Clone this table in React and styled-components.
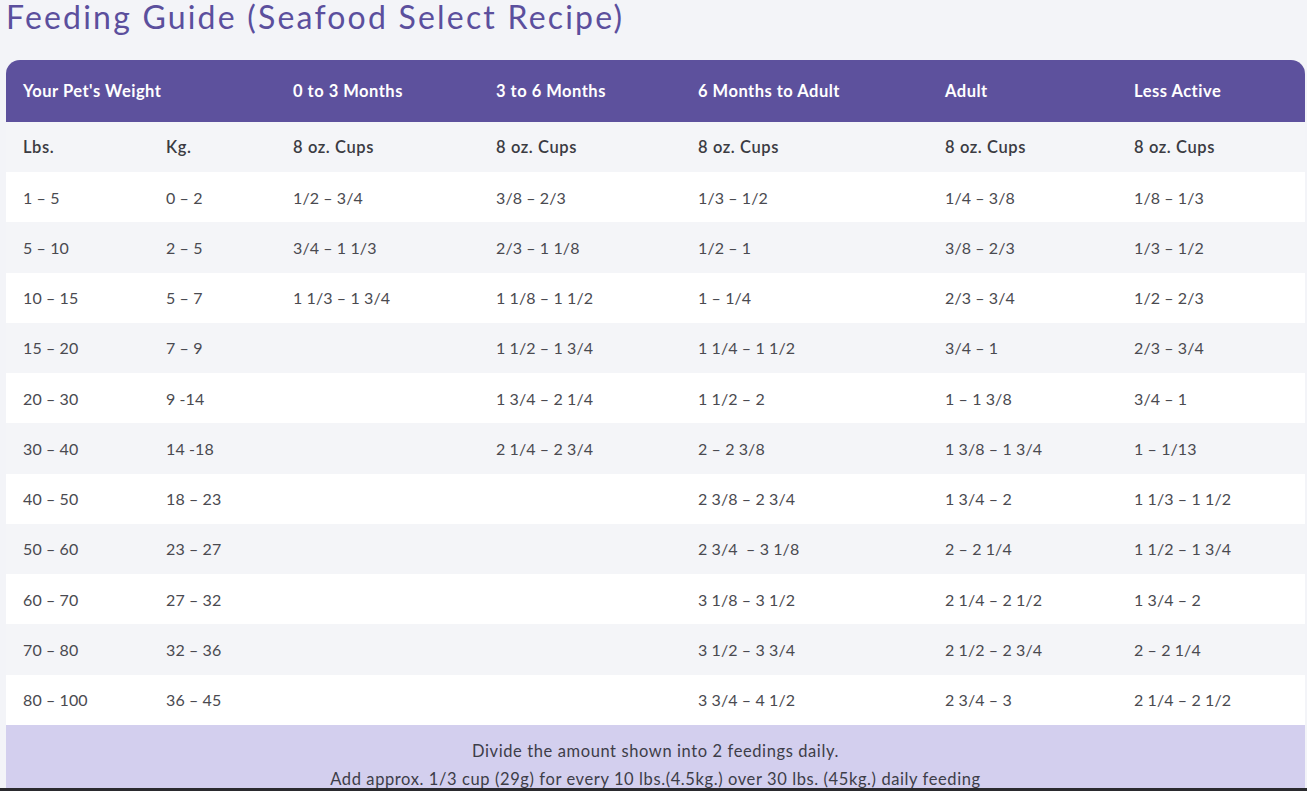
import React from 'react'
import styled, { createGlobalStyle } from 'styled-components'

const GlobalStyle = createGlobalStyle`
  html, body {
    margin: 0;
    padding: 0;
    background: #f3f4f8;
    font-family: Lato, "Open Sans", sans-serif;
    overflow: hidden;
  }
`

const COLS = '143px 127px 203px 202px 247px 189px 188px'

const rows = [
  ['1 – 5', '0 – 2', '1/2 – 3/4', '3/8 – 2/3', '1/3 – 1/2', '1/4 – 3/8', '1/8 – 1/3'],
  ['5 – 10', '2 – 5', '3/4 – 1 1/3', '2/3 – 1 1/8', '1/2 – 1', '3/8 – 2/3', '1/3 – 1/2'],
  ['10 – 15', '5 – 7', '1 1/3 – 1 3/4', '1 1/8 – 1 1/2', '1 – 1/4', '2/3 – 3/4', '1/2 – 2/3'],
  ['15 – 20', '7 – 9', '', '1 1/2 – 1 3/4', '1 1/4 – 1 1/2', '3/4 – 1', '2/3 – 3/4'],
  ['20 – 30', '9 -14', '', '1 3/4 – 2 1/4', '1 1/2 – 2', '1 – 1 3/8', '3/4 – 1'],
  ['30 – 40', '14 -18', '', '2 1/4 – 2 3/4', '2 – 2 3/8', '1 3/8 – 1 3/4', '1 – 1/13'],
  ['40 – 50', '18 – 23', '', '', '2 3/8 – 2 3/4', '1 3/4 – 2', '1 1/3 – 1 1/2'],
  ['50 – 60', '23 – 27', '', '', '2 3/4  – 3 1/8', '2 – 2 1/4', '1 1/2 – 1 3/4'],
  ['60 – 70', '27 – 32', '', '', '3 1/8 – 3 1/2', '2 1/4 – 2 1/2', '1 3/4 – 2'],
  ['70 – 80', '32 – 36', '', '', '3 1/2 – 3 3/4', '2 1/2 – 2 3/4', '2 – 2 1/4'],
  ['80 – 100', '36 – 45', '', '', '3 3/4 – 4 1/2', '2 3/4 – 3', '2 1/4 – 2 1/2'],
]

const Page = styled.div`
  padding: 0 2px 0 6px;
`

const Title = styled.h1`
  margin: 0;
  height: 60px;
  font-size: 32px;
  line-height: 34px;
  font-weight: 400;
  color: #5b4f9d;
  letter-spacing: 2.2px;
`

const Table = styled.div`
  display: grid;
  grid-template-columns: ${COLS};
  border-radius: 14px 14px 0 0;
  overflow: hidden;
`

const HeadRow = styled.div`
  display: contents;
`

const HeadCell = styled.div`
  grid-column: span ${(p) => p.span || 1};
  height: 62px;
  display: flex;
  align-items: center;
  padding-left: 17px;
  background: #5d519d;
  color: #fff;
  font-size: 16.5px;
  font-weight: 700;
  letter-spacing: 0.5px;
`

const Cell = styled.div`
  height: ${(p) => (p.$sub ? '50px' : '50.27px')};
  display: flex;
  align-items: center;
  padding-left: 17px;
  background: ${(p) => (p.$shade ? '#f4f5f8' : '#ffffff')};
  color: ${(p) => (p.$sub ? '#3b3b42' : '#4a4a50')};
  font-size: ${(p) => (p.$sub ? '16.5px' : '16px')};
  font-weight: ${(p) => (p.$sub ? 600 : 400)};
  letter-spacing: ${(p) => (p.$sub ? '0.6px' : '0.1px')};
  white-space: pre;
`

const Note = styled.div`
  grid-column: 1 / -1;
  background: #d3cfee;
  padding: 12px 0 2px;
  height: 49px;
  text-align: center;
  color: #3d3d48;
  font-size: 16.5px;
  line-height: 28px;
  letter-spacing: 0.6px;
`

const Bottom = styled.div`
  height: 20px;
  margin-left: -6px;
  margin-right: -2px;
  background: #2a2a2e;
`

export default function App() {
  return (
    <>
      <GlobalStyle />
      <Page>
        <Title>Feeding Guide (Seafood Select Recipe)</Title>
        <Table>
          <HeadRow>
            <HeadCell span={2}>Your Pet's Weight</HeadCell>
            <HeadCell>0 to 3 Months</HeadCell>
            <HeadCell>3 to 6 Months</HeadCell>
            <HeadCell>6 Months to Adult</HeadCell>
            <HeadCell>Adult</HeadCell>
            <HeadCell>Less Active</HeadCell>
          </HeadRow>
          {['Lbs.', 'Kg.', '8 oz. Cups', '8 oz. Cups', '8 oz. Cups', '8 oz. Cups', '8 oz. Cups'].map((t, i) => (
            <Cell key={'s' + i} $shade $sub>
              {t}
            </Cell>
          ))}
          {rows.map((r, ri) =>
            r.map((t, ci) => (
              <Cell key={ri + '-' + ci} $shade={ri % 2 === 1}>
                {t}
              </Cell>
            ))
          )}
          <Note>
            Divide the amount shown into 2 feedings daily.
            <br />
            Add approx. 1/3 cup (29g) for every 10 lbs.(4.5kg.) over 30 lbs. (45kg.) daily feeding
          </Note>
        </Table>
        <Bottom />
      </Page>
    </>
  )
}
